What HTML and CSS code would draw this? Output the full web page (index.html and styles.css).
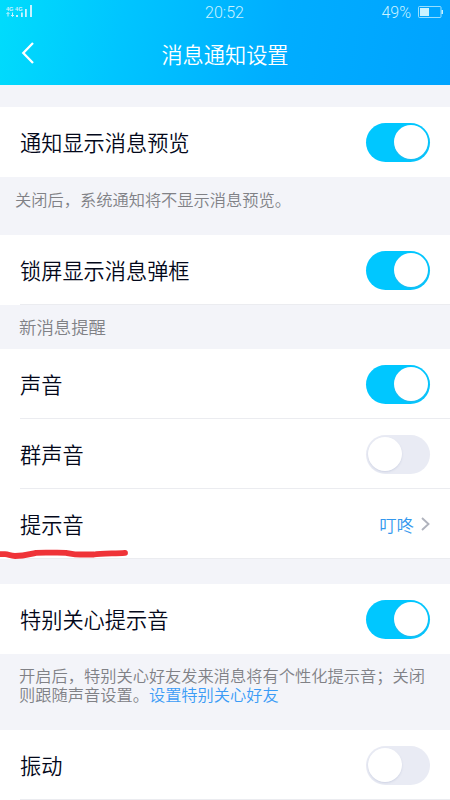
FILE: index.html
```html
<!DOCTYPE html>
<html lang="zh-CN">
<head>
<meta charset="utf-8">
<title>消息通知设置</title>
<link rel="stylesheet" href="styles.css">
</head>
<body>
<header class="header">
  <div class="status">
    <div class="signal">
      <div class="network"><span>4G 4G</span>
        <svg width="9" height="5" viewBox="0 0 9 5"><path d="M2 .5v4M.5 2 2 .5 3.500 2M6.500 .5v4M5 3l1.500 1.500L8 3" fill="none" stroke="currentColor"/></svg>
      </div>
      <svg class="bars" width="17" height="12" viewBox="0 0 17 12" fill="currentColor"><path d="M1 10h2v2H1zM6 7.500h1.800V12H6zM10 4h1.800v8H10zM15 0h2v12h-2z"/></svg>
    </div>
    <time class="clock">20:52</time>
    <div class="battery"><span>49%</span>
      <svg width="25" height="12" viewBox="0 0 25 12"><rect x=".5" y=".5" width="22.500" height="11" rx="1" fill="none" stroke="currentColor" opacity=".75"/><path d="M2 2h9v8H2zM23.500 4H25v4h-1.500z" fill="currentColor"/></svg>
    </div>
  </div>
  <div class="nav">
    <svg class="back" width="14" height="24" viewBox="0 0 14 24"><path d="M13 2 3.300 12 13 22" fill="none" stroke="#fff" stroke-width="2.300"/></svg>
    <h1 class="title">消息通知设置</h1>
  </div>
</header>
<main>
  <div class="gap gap-top"></div>
  <div class="row"><span class="label">通知显示消息预览</span><span class="switch on"></span></div>
  <p class="note note-preview">关闭后，系统通知将不显示消息预览。</p>
  <div class="row line"><span class="label">锁屏显示消息弹框</span><span class="switch on"></span></div>
  <h2 class="section">新消息提醒</h2>
  <div class="row line"><span class="label">声音</span><span class="switch on"></span></div>
  <div class="row line"><span class="label">群声音</span><span class="switch"></span></div>
  <div class="row line"><span class="label">提示音</span>
    <span class="value">叮咚<svg width="9" height="16" viewBox="0 0 9 16"><path d="m1 2 6.500 6L1 14" fill="none" stroke="#b0b3bd" stroke-width="1.900"/></svg></span>
    <svg class="mark" width="130" height="14" viewBox="0 0 130 14"><path d="M-3 6.200H5C9 6.200 10 8 15 8C24 8 28 6.500 36 4.800C44 4.400 58 4.800 66 4.800C73 6 75 6.500 80 6.500H94C100 5.500 112 5.500 125 4.800" fill="none" stroke="#ef3338" stroke-width="5.800" stroke-linecap="round" stroke-linejoin="round"/></svg>
  </div>
  <div class="gap gap-mid"></div>
  <div class="row"><span class="label">特别关心提示音</span><span class="switch on"></span></div>
  <p class="note note-care">开启后，特别关心好友发来消息将有个性化提示音；关闭<br>则跟随声音设置。<a class="link">设置特别关心好友</a></p>
  <div class="row line"><span class="label">振动</span><span class="switch"></span></div>
</main>
</body>
</html>
```
FILE: styles.css
```css
* { box-sizing: border-box; }
body {
  margin: 0;
  width: 450px;
  height: 800px;
  overflow: hidden;
  background: #f3f4f9;
  color: #03081a;
  font-family: "Noto Sans CJK SC", sans-serif;
  font-weight: 350;
}
h1, h2, p { margin: 0; font-weight: 350; }
svg { display: block; flex: none; }
.header {
  height: 85px;
  background: linear-gradient(100deg, #00dcfc 0%, #00c5ff 27%, #00adff 62%, #00a3ff 100%);
  color: #fff;
}
.status {
  display: grid;
  grid-template-columns: 1fr auto 1fr;
  align-items: center;
  height: 24px;
  padding: 0 7px 0 6px;
  font-family: Roboto, sans-serif;
  font-size: 16px;
  font-weight: 300;
  color: #c9f2ff;
}
.signal { display: flex; align-items: flex-end; height: 12px; margin-top: -2px; }
.network { width: 18px; font: 700 5.6px/6px "Liberation Sans", sans-serif; white-space: nowrap; }
.bars { margin-left: -9px; }
.battery { display: flex; align-items: center; justify-content: flex-end; gap: 7px; }
.nav { position: relative; height: 61px; display: flex; align-items: center; justify-content: center; }
.back { position: absolute; left: 20px; top: 17px; }
.title { font-size: 21.2px; line-height: 59px; margin-top: -2px; }
.gap-top { height: 22px; }
.gap-mid { height: 25px; }
.row {
  position: relative;
  display: flex;
  align-items: center;
  justify-content: space-between;
  height: 70px;
  padding: 0 20px;
  background: #fff;
}
.line::after {
  content: "";
  position: absolute;
  left: 20px;
  right: 0;
  bottom: 0;
  height: 1px;
  background: #ebecf0;
}
.label { font-size: 21.2px; line-height: 32px; }
.switch {
  display: flex;
  align-items: center;
  width: 64px;
  height: 39px;
  padding: 0 2px;
  border-radius: 20px;
  background: #e9ebf4;
}
.switch::before {
  content: "";
  width: 34px;
  height: 34px;
  border-radius: 50%;
  background: #fff;
  box-shadow: 0 1px 2px #8792b744;
}
.switch.on { justify-content: flex-end; background: #00c7ff; }
.note { color: #808186; font-size: 16.24px; line-height: 19px; white-space: nowrap; }
.note-preview { height: 58px; padding: 13px 15px; }
.note-care { height: 76px; padding: 12px 19px; }
.link { color: #3c9cf6; }
.section { height: 44px; padding-left: 19px; font-size: 17.4px; line-height: 44px; color: #808186; }
.value { display: flex; align-items: center; gap: 7px; font-size: 17.4px; color: #3398ee; }
.mark { position: absolute; z-index: 1; left: 0; bottom: -3px; }
```
